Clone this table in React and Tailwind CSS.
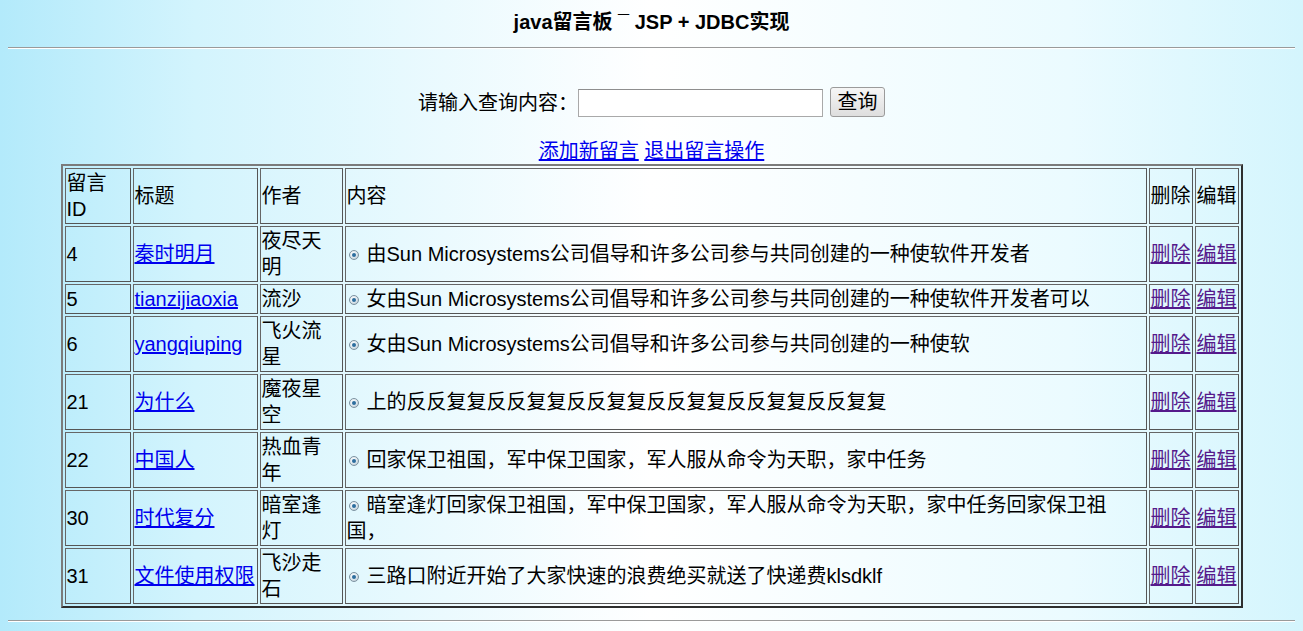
const ROWS = [
  { id: 4, title: "秦时明月", author: "夜尽天明", content: "由Sun Microsystems公司倡导和许多公司参与共同创建的一种使软件开发者" },
  { id: 5, title: "tianzijiaoxia", author: "流沙", content: "女由Sun Microsystems公司倡导和许多公司参与共同创建的一种使软件开发者可以" },
  { id: 6, title: "yangqiuping", author: "飞火流星", content: "女由Sun Microsystems公司倡导和许多公司参与共同创建的一种使软" },
  { id: 21, title: "为什么", author: "魔夜星空", content: "上的反反复复反反复复反反复复反反复复反反复复反反复复" },
  { id: 22, title: "中国人", author: "热血青年", content: "回家保卫祖国，军中保卫国家，军人服从命令为天职，家中任务" },
  { id: 30, title: "时代复分", author: "暗室逢灯", content: "暗室逢灯回家保卫祖国，军中保卫国家，军人服从命令为天职，家中任务回家保卫祖国，" },
  { id: 31, title: "文件使用权限", author: "飞沙走石", content: "三路口附近开始了大家快速的浪费绝买就送了快递费klsdklf" },
];

const cell = "border border-[#555] border-t-[#666] border-l-[#666] p-[1px] align-middle text-left font-normal";

// round blue "radio" bullet in front of each message
function Bullet() {
  return (
    <span className="inline-flex w-[10px] h-[10px] ml-[2px] mr-[8px] items-center justify-center align-[4px] rounded-full border border-[#7d93a1] bg-[radial-gradient(circle_at_40%_35%,#ffffff_0%,#dfe8ee_50%,#a8bac5_100%)]">
      <span className="w-[4px] h-[4px] rounded-full bg-[#2c6d9e]" />
    </span>
  );
}

function Hr({ className = "" }) {
  return <div className={`mx-[8px] border-t border-t-[#9a9a9a] border-b border-b-white ${className}`} />;
}

export default function App() {
  return (
    <div
      className="min-h-screen text-black bg-[linear-gradient(to_right,#b3eafb_0%,#d3f4fd_15%,#ffffff_50%,#ebfbff_82%,#d4f5fd_100%)]"
      style={{ fontFamily: '"Liberation Sans", "Noto Sans CJK SC", sans-serif' }}
    >
      <div className="pt-[8px] text-center text-[20px] leading-[28px] font-bold">
        java留言板 ¯ JSP + JDBC实现
      </div>
      <Hr className="mt-[11px]" />

      {/* search */}
      <div className="mt-[38px] flex justify-center items-center h-[30px] text-[20px]">
        <span className="leading-[26px] mt-[2px]">请输入查询内容：</span>
        <input className="w-[245px] h-[28px] mt-[2px] bg-white border border-[#a9a9a9] border-t-[#8e8e8e] outline-none px-1" />
        <button className="ml-[7px] w-[55px] h-[30px] leading-[26px] rounded-[3px] border border-[#9b9b9b] bg-[linear-gradient(to_bottom,#f6f6f6,#dedede)] text-[20px]">
          查询
        </button>
      </div>

      <div className="mt-[21px] text-center text-[20px] leading-[26px]">
        <a href="#" className="text-[#0000ee] underline">添加新留言</a>{" "}
        <a href="#" className="text-[#0000ee] underline">退出留言操作</a>
      </div>

      <table className="mx-auto w-[1182px] table-fixed border-separate border-spacing-[2px] border-2 border-[#7b7b7b] border-r-[#2e2e2e] border-b-[#2e2e2e] text-[20px] leading-[26px]">
        <thead>
          <tr>
            <th className={`${cell} w-[66px]`}>留言<br />ID</th>
            <th className={`${cell} w-[125px]`}>标题</th>
            <th className={`${cell} w-[83px]`}>作者</th>
            <th className={cell}>内容</th>
            <th className={`${cell} w-[44px]`}>删除</th>
            <th className={`${cell} w-[44px]`}>编辑</th>
          </tr>
        </thead>
        <tbody>
          {ROWS.map((r) => (
            <tr key={r.id}>
              <td className={cell}>{r.id}</td>
              <td className={`${cell} whitespace-nowrap`}>
                <a href="#" className="text-[#0000ee] underline">{r.title}</a>
              </td>
              <td className={cell}>{r.author}</td>
              <td className={cell}>
                <Bullet />
                {r.content}
              </td>
              <td className={cell}>
                <a href="#" className="text-[#551a8b] underline">删除</a>
              </td>
              <td className={cell}>
                <a href="#" className="text-[#551a8b] underline">编辑</a>
              </td>
            </tr>
          ))}
        </tbody>
      </table>

      <Hr className="mt-[12px]" />
    </div>
  );
}
